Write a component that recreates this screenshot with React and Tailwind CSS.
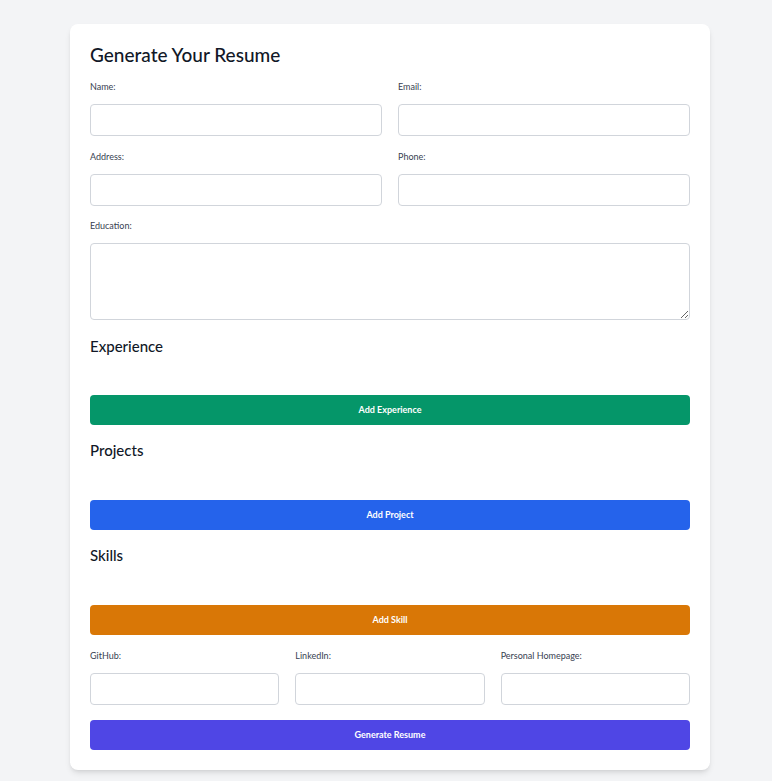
import React from "react";

function Field({ label }) {
  return (
    <div className="flex flex-col">
      <label className="text-[9px] leading-[14px] text-[#374151] mb-[10px]">{label}</label>
      <input type="text" className="h-8 w-full rounded border border-[#d1d5db] bg-white px-2 text-sm outline-none" />
    </div>
  );
}

function Section({ title, button, color, first = false }) {
  return (
    <div className={`flex flex-col ${first ? "mt-[14px]" : "mt-[13px]"}`}>
      <h3 className="text-[15px] leading-6 font-medium text-[#111827]">{title}</h3>
      <div className={first ? "h-[37px]" : "h-[38px]"} />
      <button className={`h-[30px] w-full rounded text-white text-[9px] font-bold ${color}`}>
        {button}
      </button>
    </div>
  );
}

export default function App() {
  return (
    <div className="min-h-screen bg-[#f3f4f6] pt-6 pb-4 pl-2 font-['Lato',sans-serif]">
      <div className="mx-auto w-[640px] rounded-lg bg-white p-5 shadow-md">
        <h2 className="text-[19px] leading-[26px] font-medium text-[#111827] -mt-[2px] mb-[12px]">Generate Your Resume</h2>

        <div className="grid grid-cols-2 gap-x-4 gap-y-[14px]">
          <Field label="Name:" />
          <Field label="Email:" />
          <Field label="Address:" />
          <Field label="Phone:" />
        </div>

        <div className="flex flex-col mt-[13px]">
          <label className="text-[9px] leading-[14px] text-[#374151] mb-[10px]">Education:</label>
          <textarea className="h-[77px] w-full rounded border border-[#d1d5db] bg-white px-2 py-1 text-sm outline-none" />
        </div>

        <Section title="Experience" button="Add Experience" color="bg-[#059669]" first />
        <Section title="Projects" button="Add Project" color="bg-[#2563eb]" />
        <Section title="Skills" button="Add Skill" color="bg-[#d97706]" />

        <div className="grid grid-cols-3 gap-4 mt-[14px]">
          <Field label="GitHub:" />
          <Field label="LinkedIn:" />
          <Field label="Personal Homepage:" />
        </div>

        <button className="mt-[15px] h-[30px] w-full rounded bg-[#4f46e5] text-white text-[9px] font-bold">
          Generate Resume
        </button>
      </div>
    </div>
  );
}
